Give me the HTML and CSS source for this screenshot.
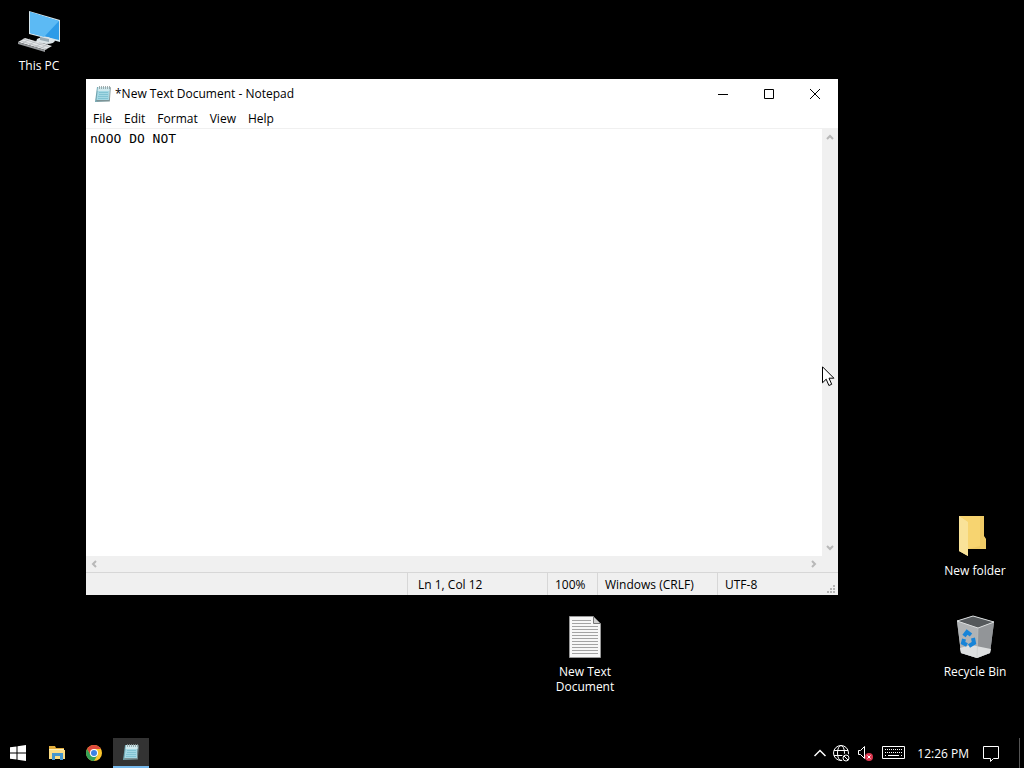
FILE: index.html
```html
<!DOCTYPE html>
<html lang="en">

<head>
    <meta charset="UTF-8">
    <meta name="viewport" content="width=device-width, initial-scale=1.0">
    <title>Desktop</title>
    <link rel="stylesheet" href="styles.css">
</head>

<body>
    <!--Shared icons-->
    <svg class="defs" width="0" height="0" aria-hidden="true">
        <symbol id="notepad" viewBox="0 0 18 18">
            <path d="M1 17L3 2h12v14z" fill="#6fa3ae" />
            <path d="M4 2h12l-1 13H2.500z" fill="#a4d8e4" />
            <path d="M4 2h12l-.3 4H3.600z" fill="#cfe9ee" />
            <path d="M16 2l.8.5-1 14H3l-.5-1.500h12.500z" fill="#7d9396" />
            <path d="M5 7.500h9M5 9.500h9M4 11.500h10M4 13.500h10" stroke="#82c3d2" fill="none" />
            <path d="M5.500 1v3M7.500 1v3M9.500 1v3M11.500 1v3M13.500 1v3M15.500 1v3" stroke="#8a999b" stroke-width=".8" fill="none" />
        </symbol>
    </svg>

    <main class="desktop">
        <!--Desktop icons-->
        <a class="shortcut" id="thisPc" href="#">
            <svg width="48" height="48" viewBox="0 0 48 48">
                <path d="M14 5l31 9v22l-31-8z" fill="#d5e6ed" />
                <path d="M15 6l29 9v19l-29-7z" fill="#2d9be8" />
                <path d="M15 6l29 9-15 16-14-4z" fill="#5cbaf4" />
                <path d="M22 33q5-3 11-2l7 3q0 4-9 4l-10-2z" fill="#dce4e8" />
                <path d="M25 31l9 2v3l-9-2z" fill="#98a9b3" />
                <path d="M3 36l7-4 27 8-7 4z" fill="#e3e5e7" />
                <path d="M3 36l27 8v2L3 38z" fill="#96999c" />
                <path d="M6 35l26 8M8 33l26 8M8 37l7-4M14 39l7-4M20 41l7-4M26 42l7-4" stroke="#b3b8bb" fill="none" stroke-width=".7" />
            </svg>
            <span>This PC</span>
        </a>
        <a class="shortcut" id="newFolder" href="#">
            <svg width="48" height="48" viewBox="0 0 48 48">
                <path d="M8 5h25v20l2 3v10H16l-8-6z" fill="#f6d778" />
                <path d="M8 5l9 6v34l-9-5z" fill="#f9e298" />
                <path d="M17 11v27h18v-9l-2-3V5H8z" fill="#efca66" />
                <path d="M17 11v27l12-3V5H8z" fill="#fad976" opacity=".65" />
                <path d="M8 5l9 6v34l-9-5z" fill="#f9e298" />
            </svg>
            <span>New folder</span>
        </a>
        <a class="shortcut" id="recycleBin" href="#">
            <svg width="48" height="48" viewBox="0 0 48 48">
                <path d="M6 9l16-5 21 6-4 31-13 5-16-5z" fill="#a6a9ab" />
                <path d="M6 9l16-5 21 6-16 6z" fill="#55595c" />
                <path d="M6 9l21 7-1 30-16-5z" fill="#b0b3b5" />
                <path d="M27 16l16-6-4 31-13 5z" fill="#929598" />
                <path d="M9 36l11-3 20 4-1 4-13 5-16-5z" fill="#dddfe0" />
                <path d="M6 9l16-5 21 6-16 6z" fill="none" stroke="#d9dcdd" />
                <path d="M27 16l-1 30" stroke="#c4c7c8" stroke-width=".6" />
                <g fill="none" stroke="#1784d8" stroke-width="4">
                    <path d="M13 24l3-4 4 3" />
                    <path d="M22 26l1 5-5 3" />
                    <path d="M16 33l-4-2 1-4" />
                </g>
            </svg>
            <span>Recycle Bin</span>
        </a>
        <a class="shortcut" id="newText" href="#">
            <svg width="48" height="48" viewBox="0 0 48 48">
                <path d="M8.500 4.500h24l7 7v34h-31z" fill="#f7f7f7" stroke="#999" />
                <path d="M32.500 4.500v7h7z" fill="#d0d0d0" stroke="#777" />
                <path d="M11 8.500h19M11 11.500h19M11 14.500h26M11 17.500h26M11 20.500h26M11 23.500h26M11 26.500h26M11 29.500h26M11 32.500h26M11 35.500h26M11 38.500h26M11 41.500h26" stroke="#a3a3a3" />
            </svg>
            <span>New Text Document</span>
        </a>

        <!--Notepad window-->
        <section class="window">
            <header class="titlebar">
                <svg width="18" height="18"><use href="#notepad" /></svg>
                <h1>*New Text Document - Notepad</h1>
                <button type="button" aria-label="Minimize">
                    <svg width="12" height="12"><path d="M1 6.500h10" /></svg>
                </button>
                <button type="button" aria-label="Maximize">
                    <svg width="12" height="12"><path d="M1.500 1.500h9v9h-9z" /></svg>
                </button>
                <button type="button" aria-label="Close">
                    <svg width="12" height="12"><path d="M1 1l10 10M11 1L1 11" /></svg>
                </button>
            </header>
            <nav class="menu">
                <button type="button">File</button>
                <button type="button">Edit</button>
                <button type="button">Format</button>
                <button type="button">View</button>
                <button type="button">Help</button>
            </nav>
            <div class="editor">
                <textarea aria-label="Document text" spellcheck="false">nOOO DO NOT</textarea>
                <div class="scroll vertical">
                    <button type="button" aria-label="Scroll up">
                        <svg width="8" height="8"><path d="M1 6l3-3 3 3" /></svg>
                    </button>
                    <button type="button" aria-label="Scroll down">
                        <svg width="8" height="8"><path d="M1 2l3 3 3-3" /></svg>
                    </button>
                </div>
                <div class="scroll horizontal">
                    <button type="button" aria-label="Scroll left">
                        <svg width="8" height="8"><path d="M6 1L3 4l3 3" /></svg>
                    </button>
                    <button type="button" aria-label="Scroll right">
                        <svg width="8" height="8"><path d="M2 1l3 3-3 3" /></svg>
                    </button>
                </div>
            </div>
            <footer class="status">
                <span></span>
                <span class="position">Ln 1, Col 12</span>
                <span>100%</span>
                <span>Windows (CRLF)</span>
                <span>UTF-8</span>
                <svg width="10" height="10" fill="#b5b5b5"><path d="M7 0h2v2H7zM4 3h2v2H4zM7 3h2v2H7zM1 6h2v2H1zM4 6h2v2H4zM7 6h2v2H7z" /></svg>
            </footer>
        </section>

        <svg class="cursor" width="13" height="21" viewBox="0 0 13 21">
            <path d="M.5.8v16l3.700-3.600 2.700 6.300 2.800-1.200L7 12.200h4.900z" fill="#fff" stroke="#000" />
        </svg>
    </main>

    <!--Taskbar-->
    <footer class="taskbar">
        <button type="button" class="task start" aria-label="Start">
            <svg width="16" height="16" fill="#fff"><path d="M0 2.300L6.500 1.400v6.100H0zM7.500 1.200L16 0v7.500H7.500zM0 8.500h6.500v6.100L0 13.700zM7.500 8.500H16V16l-8.500-1.200z" /></svg>
        </button>
        <button type="button" class="task" aria-label="File Explorer">
            <svg width="18" height="16">
                <path d="M1 1h6l1 2h8v11H1z" fill="#e2ae3d" />
                <path d="M1 5h16v9H1z" fill="#fbdc83" />
                <path d="M1 4h15v1H1z" fill="#fff0b8" />
                <path d="M4 15V8h11v7h-3v-4H7v4z" fill="#4596cd" />
            </svg>
        </button>
        <button type="button" class="task" aria-label="Chrome">
            <svg width="16" height="16">
                <circle cx="8" cy="8" r="8" fill="#fbc52d" />
                <path d="M1.100 4A8 8 0 0 1 14.900 4H8L4.500 10z" fill="#df4a3c" />
                <path d="M1.100 4A8 8 0 0 0 8 16l3.500-6H4.500z" fill="#34a159" />
                <circle cx="8" cy="8" r="4" fill="#fff" />
                <circle cx="8" cy="8" r="3" fill="#3d82e4" />
            </svg>
        </button>
        <button type="button" class="task active" aria-label="Notepad">
            <svg width="18" height="18"><use href="#notepad" /></svg>
        </button>

        <div class="tray">
            <button type="button" aria-label="Show hidden icons">
                <svg width="12" height="8"><path d="M.5 7L6 1.500 11.500 7" stroke-width="1.500" /></svg>
            </button>
            <button type="button" aria-label="Network">
                <svg width="17" height="17">
                    <circle cx="8" cy="8" r="7.500" />
                    <ellipse cx="8" cy="8" rx="3.500" ry="7.500" />
                    <path d="M1 5.500h14M1 10.500h14" />
                    <circle cx="13" cy="13" r="4.500" fill="#000" stroke="none" />
                    <circle cx="13" cy="13" r="3" />
                    <path d="M11 11l4 4" />
                </svg>
            </button>
            <button type="button" aria-label="Volume">
                <svg width="18" height="18">
                    <path d="M1.500 6.500h2l4-4v12l-4-4h-2z" />
                    <circle cx="12" cy="13" r="4" fill="#d9364e" stroke="none" />
                    <path d="M10.500 11.500l3 3M13.500 11.500l-3 3" />
                </svg>
            </button>
            <button type="button" aria-label="Touch keyboard">
                <svg width="24" height="14">
                    <path d="M.5.500h22v12H.500z" />
                    <path d="M3 3.500h17M3 6.500h17" stroke-dasharray="1 1" />
                    <path d="M3 9.500h1M6 9.500h11M19 9.500h1" />
                </svg>
            </button>
            <time>12:26 PM</time>
            <button type="button" aria-label="Notifications">
                <svg width="18" height="17"><path d="M1.500 1.500h15v12h-5l-3 3v-3h-7z" /></svg>
            </button>
            <button type="button" class="peek" aria-label="Show desktop"></button>
        </div>
    </footer>
</body>

</html>
```
FILE: styles.css
```css
* {
    box-sizing: border-box;
}

body {
    margin: 0;
    height: 100vh;
    display: flex;
    flex-direction: column;
    overflow: hidden;
    background-color: black;
    color: black;
    font: 12px/15px "Open Sans", "Noto Sans", sans-serif;
}

svg {
    display: block;
    flex: none;
}

button {
    display: flex;
    align-items: center;
    justify-content: center;
    margin: 0;
    padding: 0;
    border: 0;
    background: none;
    color: inherit;
    font: inherit;
}

.defs {
    position: absolute;
}

.desktop {
    position: relative;
    flex: 1;
}

/* desktop icons */
.shortcut {
    position: absolute;
    width: 76px;
    display: flex;
    flex-direction: column;
    align-items: center;
    gap: 4px;
    color: white;
    text-align: center;
    text-decoration: none;
}

#thisPc {
    left: 1px;
    top: 6px;
}

#newFolder {
    right: 11px;
    top: 511px;
}

#recycleBin {
    right: 11px;
    top: 612px;
}

#newText {
    left: 547px;
    top: 612px;
}

/* notepad */
.window {
    position: absolute;
    left: 86px;
    top: 79px;
    width: 752px;
    height: 516px;
    display: flex;
    flex-direction: column;
    background-color: white;
}

.titlebar {
    display: flex;
    height: 29px;
    align-items: center;
    padding-left: 8px;
}

.titlebar h1 {
    flex: 1;
    margin: 0 0 0 3px;
    font-size: 12px;
    font-weight: normal;
}

.titlebar button {
    width: 46px;
    height: 28px;
}

.titlebar button svg {
    fill: none;
    stroke: black;
}

.menu {
    display: flex;
    height: 21px;
    padding-left: 1px;
    border-bottom: 1px solid #f0f0f0;
}

.menu button {
    padding: 0 6px;
}

.editor {
    flex: 1;
    display: grid;
    grid-template-columns: 1fr 16px;
    grid-template-rows: 1fr 16px;
    background-color: #f0f0f0;
}

textarea {
    padding: 2px 4px;
    border: 0;
    outline: 0;
    resize: none;
    overflow: hidden;
    background-color: white;
    color: black;
    font: 13px/15px "DejaVu Sans Mono", monospace;
}

.scroll {
    display: flex;
    justify-content: space-between;
}

.scroll button {
    width: 16px;
    height: 16px;
}

.scroll svg {
    fill: none;
    stroke: #b8b8b8;
    stroke-width: 2;
}

.vertical {
    flex-direction: column;
}

.status {
    display: grid;
    grid-template-columns: 1fr 140px 50px 120px 109px 12px;
    height: 23px;
    border-top: 1px solid #d7d7d7;
    background-color: #f0f0f0;
}

.status span {
    padding: 4px 0 0 7px;
    border-left: 1px solid #d7d7d7;
}

.status span:first-child {
    border-left: 0;
}

.status .position {
    padding-left: 10px;
}

.status svg {
    align-self: end;
}

.cursor {
    position: absolute;
    left: 822px;
    top: 366px;
}

/* taskbar */
.taskbar {
    display: flex;
    height: 30px;
    gap: 1px;
    color: white;
}

.task {
    width: 36px;
}

.start {
    margin-right: 2px;
}

.active {
    background-color: #333;
    border-bottom: 2px solid #76b9ed;
}

.tray {
    display: flex;
    gap: 7px;
    margin-left: auto;
}

.tray time {
    align-self: center;
    margin: 0 6px 0 4px;
}

.tray svg {
    fill: none;
    stroke: white;
}

.tray .peek {
    width: 5px;
    margin-left: 12px;
    border-left: 1px solid #555;
}
```
